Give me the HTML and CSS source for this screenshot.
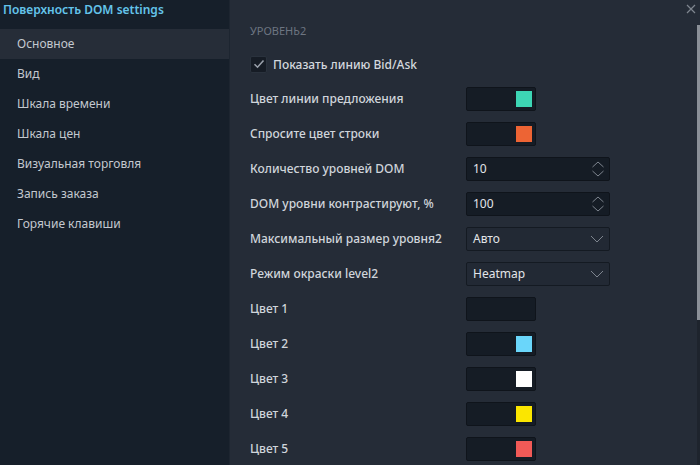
FILE: index.html
```html
<!DOCTYPE html>
<html lang="ru">
<head>
<meta charset="utf-8">
<link rel="stylesheet" href="styles.css">
</head>
<body>
<div class="app">
  <aside class="sidebar">
    <div class="title">Поверхность DOM settings</div>
    <nav class="nav">
      <div class="nav-item active">Основное</div>
      <div class="nav-item">Вид</div>
      <div class="nav-item">Шкала времени</div>
      <div class="nav-item">Шкала цен</div>
      <div class="nav-item">Визуальная торговля</div>
      <div class="nav-item">Запись заказа</div>
      <div class="nav-item">Горячие клавиши</div>
    </nav>
  </aside>
  <main class="main">
    <div class="section">УРОВЕНЬ2</div>
    <label class="check-row">
      <span class="checkbox"><svg width="12" height="10" viewBox="0 0 12 10"><path d="M1.5 5.2 L4.5 8.2 L10.5 1.5" fill="none" stroke="#9aa1ab" stroke-width="1.6"/></svg></span>
      <span class="check-label">Показать линию Bid/Ask</span>
    </label>
    <div class="row"><span class="label">Цвет линии предложения</span><span class="swatch"><span class="chip" style="background:#3dd6b5"></span></span></div>
    <div class="row"><span class="label">Спросите цвет строки</span><span class="swatch"><span class="chip" style="background:#ed6434"></span></span></div>
    <div class="row"><span class="label">Количество уровней DOM</span><span class="field"><span class="value">10</span><svg class="spin" width="14" height="18" viewBox="0 0 14 18"><path d="M1.5 7 L7 2 L12.5 7 M1.5 11 L7 16 L12.5 11" fill="none" stroke="#7d848e" stroke-width="1"/></svg></span></div>
    <div class="row"><span class="label">DOM уровни контрастируют, %</span><span class="field"><span class="value">100</span><svg class="spin" width="14" height="18" viewBox="0 0 14 18"><path d="M1.5 7 L7 2 L12.5 7 M1.5 11 L7 16 L12.5 11" fill="none" stroke="#7d848e" stroke-width="1"/></svg></span></div>
    <div class="row"><span class="label">Максимальный размер уровня2</span><span class="field select"><span class="value">Авто</span><svg class="chev" width="14" height="8" viewBox="0 0 14 8"><path d="M1 1 L7 7 L13 1" fill="none" stroke="#7d848e" stroke-width="1"/></svg></span></div>
    <div class="row"><span class="label">Режим окраски level2</span><span class="field select"><span class="value">Heatmap</span><svg class="chev" width="14" height="8" viewBox="0 0 14 8"><path d="M1 1 L7 7 L13 1" fill="none" stroke="#7d848e" stroke-width="1"/></svg></span></div>
    <div class="row"><span class="label">Цвет 1</span><span class="swatch"></span></div>
    <div class="row"><span class="label">Цвет 2</span><span class="swatch"><span class="chip" style="background:#6ad6fa"></span></span></div>
    <div class="row"><span class="label">Цвет 3</span><span class="swatch"><span class="chip" style="background:#ffffff"></span></span></div>
    <div class="row"><span class="label">Цвет 4</span><span class="swatch"><span class="chip" style="background:#fbe600"></span></span></div>
    <div class="row"><span class="label">Цвет 5</span><span class="swatch"><span class="chip" style="background:#f15a57"></span></span></div>
  </main>
  <button class="close" aria-label="close"><svg width="10" height="10" viewBox="0 0 10 10"><path d="M1 1 L9 9 M9 1 L1 9" stroke="#7f868f" stroke-width="1.2"/></svg></button>
  <div class="scrollbar"><div class="thumb"></div></div>
</div>
</body>
</html>
```
FILE: styles.css
```css
* { box-sizing: border-box; }
html, body { margin: 0; padding: 0; }
body {
  width: 700px;
  height: 465px;
  overflow: hidden;
  background: #252c37;
  font-family: "Noto Sans", "Open Sans", sans-serif;
  font-size: 12px;
}
.app {
  position: relative;
  display: flex;
  width: 700px;
  height: 465px;
}
.sidebar {
  width: 230px;
  flex: none;
  background: #161f2a;
  border-right: 1px solid #1d2530;
}
.title {
  height: 29px;
  padding: 1px 0 0 3px;
  color: #64c4ea;
  font-weight: 600;
  font-size: 12px;
  line-height: 18px;
}
.nav { display: flex; flex-direction: column; }
.nav-item {
  height: 30px;
  line-height: 30px;
  padding-left: 17px;
  color: #c3c8cf;
  font-size: 12px;
}
.nav-item.active { background: #262d38; }
.main {
  flex: 1;
  padding: 21px 0 0 20px;
  color: #d2d6dc;
}
.section {
  color: #6d7581;
  font-size: 11px;
  line-height: 20px;
  margin-bottom: 14px;
}
.check-row {
  display: flex;
  align-items: center;
  gap: 6px;
  height: 18px;
  margin-bottom: 8px;
}
.checkbox {
  width: 17px;
  height: 17px;
  background: #161c25;
  border: 1px solid #2a323d;
  border-radius: 2px;
  display: flex;
  align-items: center;
  justify-content: center;
}
.check-label { font-weight: 500; color: #d4d8de; }
.row {
  display: flex;
  align-items: center;
  height: 35px;
}
.label {
  width: 216px;
  color: #d0d5db;
  font-weight: 500;
}
.swatch {
  width: 70px;
  height: 24px;
  background: #151c25;
  border: 1px solid #0f141b;
  border-radius: 2px;
  display: flex;
  align-items: center;
  justify-content: flex-end;
  padding-right: 3px;
}
.chip { width: 16px; height: 16px; }
.field {
  width: 144px;
  height: 24px;
  background: #151c25;
  border: 1px solid #0f141b;
  border-radius: 2px;
  display: flex;
  align-items: center;
  justify-content: space-between;
  padding: 0 4px 0 6px;
  color: #e2e5e9;
}
.field.select {
  background: #222934;
  border-color: #141a22;
  padding-right: 5px;
}
.value { font-size: 12px; }
.close {
  position: absolute;
  top: 3px;
  right: 3px;
  width: 12px;
  height: 12px;
  padding: 0;
  border: 0;
  background: none;
  display: flex;
  align-items: center;
  justify-content: center;
}
.scrollbar {
  position: absolute;
  top: 25px;
  right: 0;
  width: 3px;
  bottom: 0;
  background: #1e242d;
}
.thumb {
  height: 295px;
  background: #8b9098;
}
```
